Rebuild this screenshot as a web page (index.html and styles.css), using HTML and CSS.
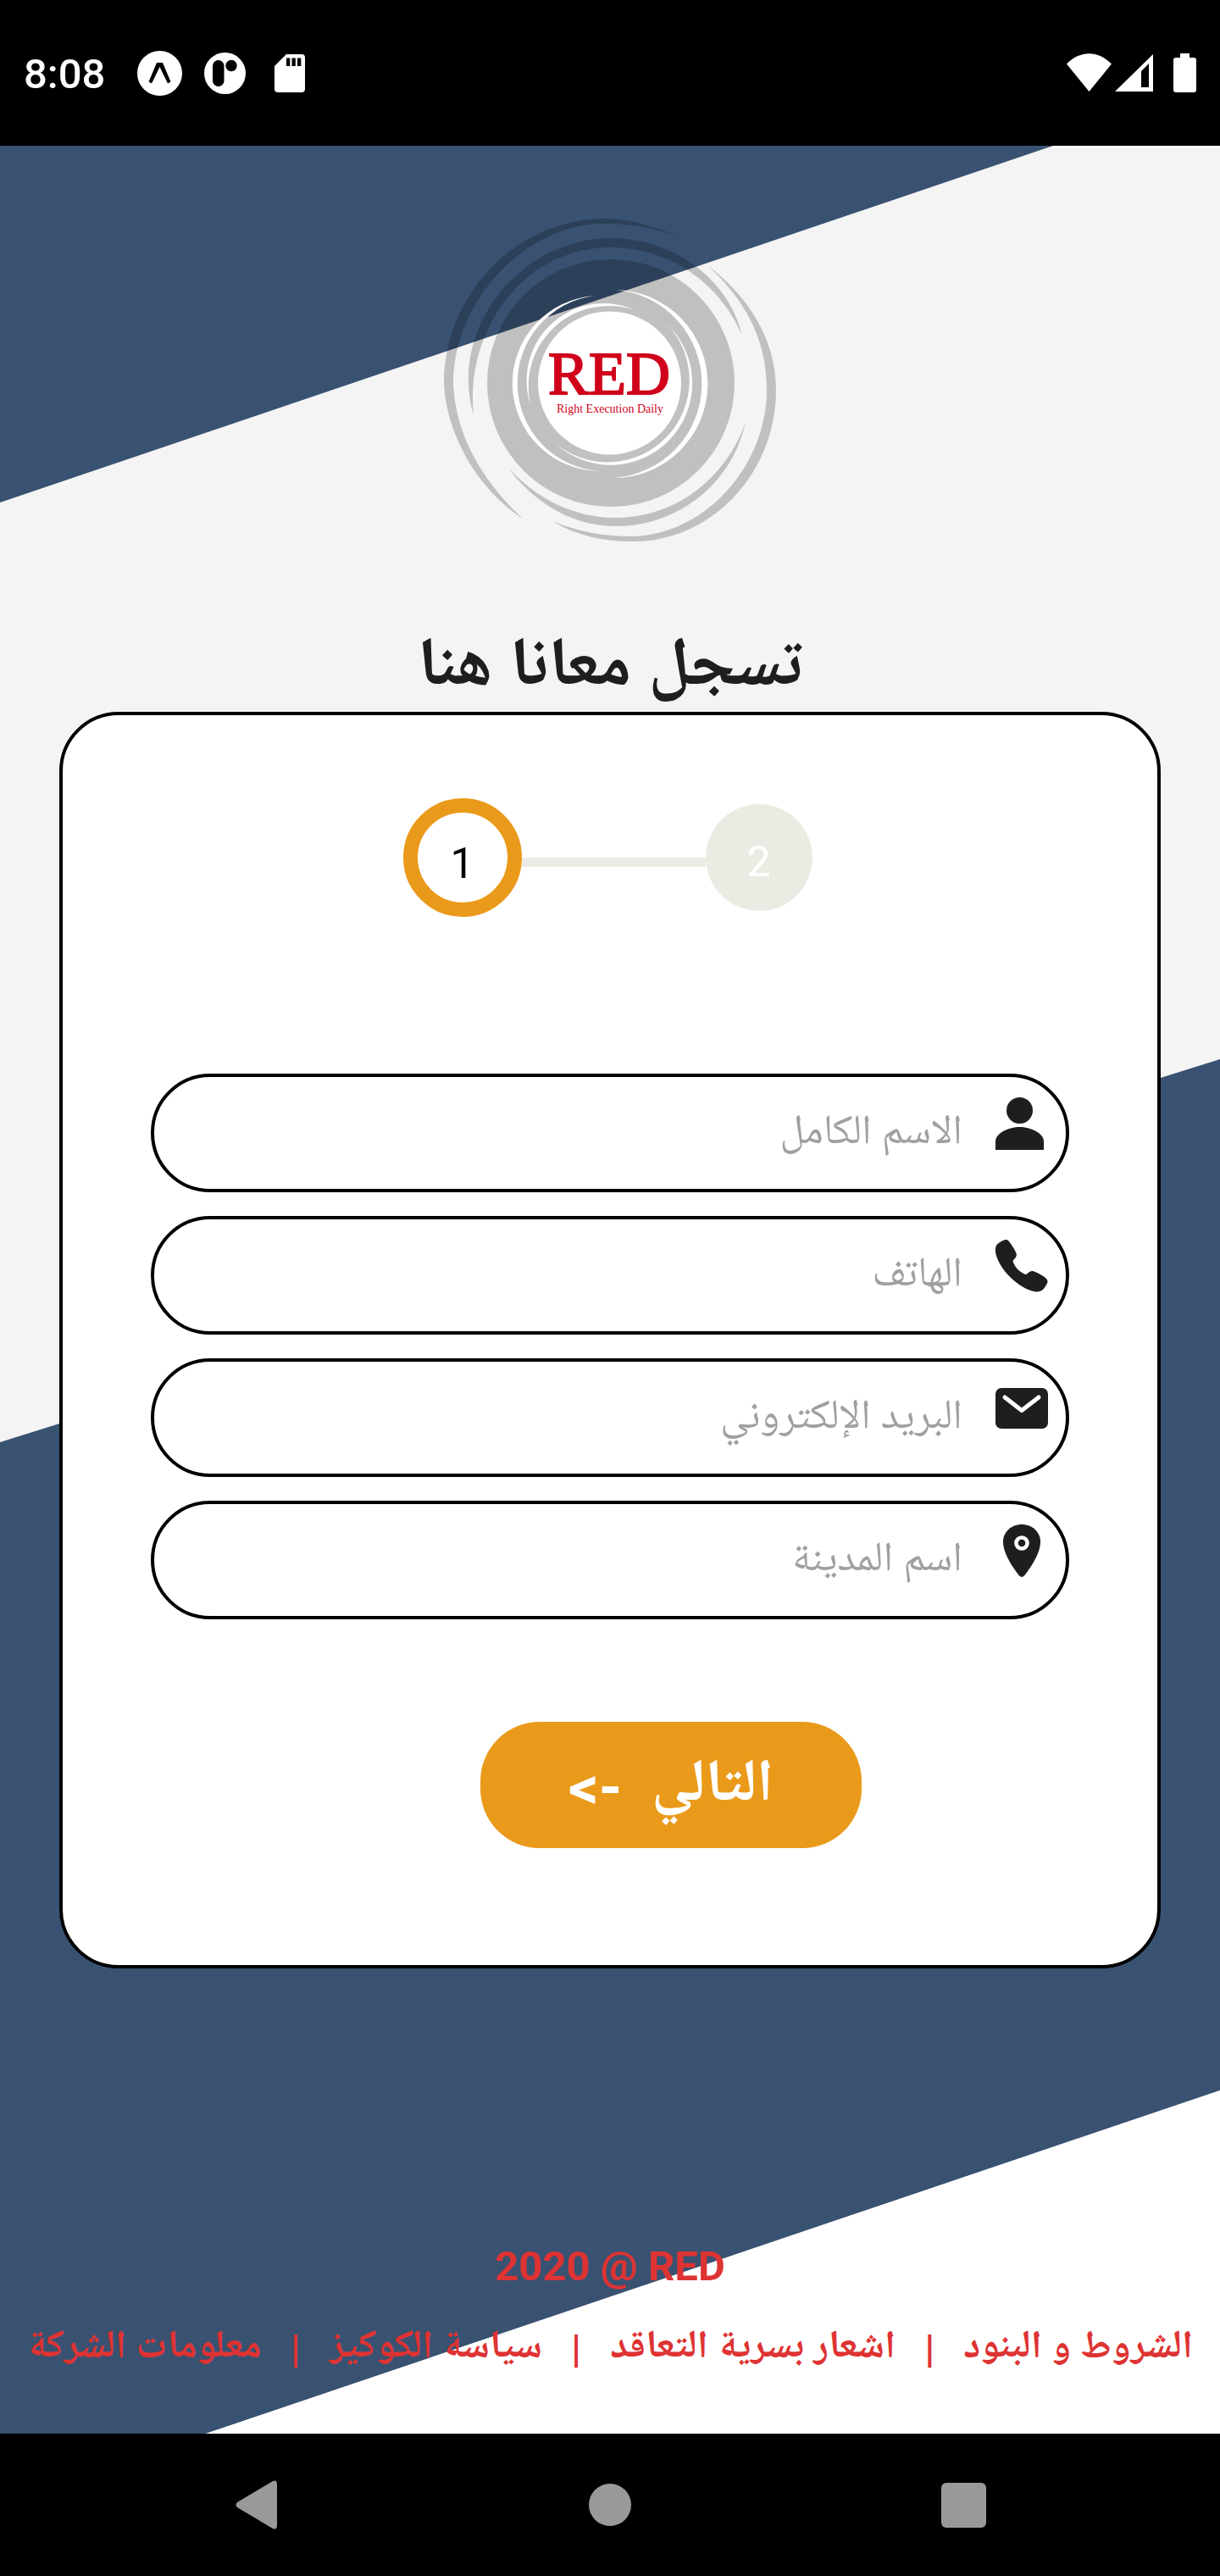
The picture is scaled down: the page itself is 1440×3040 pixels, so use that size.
FILE: index.html
```
<!DOCTYPE html>
<html lang="ar" dir="rtl">
<head>
<meta charset="utf-8">
<title>RED</title>
<link rel="stylesheet" href="styles.css">
</head>
<body>
<header class="status" dir="ltr">
  <div class="status-group status-left">
    <span class="clock">8:08</span>
    <svg width="53" height="53" viewBox="0 0 53 53"><circle cx="26.500" cy="26.500" r="26.500" fill="#fff"/><path d="M23 14h7l9.500 22.500-3.500 2L26.500 19 17 38.500l-3.500-2z" fill="#000"/></svg>
    <svg width="49" height="49" viewBox="0 0 49 49"><circle cx="24.500" cy="24.500" r="24.500" fill="#fff"/><rect x="10" y="9" width="13.500" height="31" rx="6.700" fill="#000"/><circle cx="32" cy="15.500" r="6.700" fill="#000"/></svg>
    <svg class="sd" width="36" height="45" viewBox="0 0 36 45"><path d="M14 0h18q4 0 4 4v37q0 4-4 4H4q-4 0-4-4V14z" fill="#fff"/><path d="M14 4.500h4.300v9.500h-4.300zM20.500 4.500h4.300v9.500h-4.300zM27 4.500h4.300v9.500H27z" fill="#000"/></svg>
  </div>
  <div class="status-group status-right">
    <svg width="53" height="46" viewBox="0 0 53 46" fill="#fff"><path d="M26.500 45 0 12.500C16-4 37-4 53 12.500z"/></svg>
    <svg width="45" height="46" viewBox="0 0 45 46" fill="#fff" fill-rule="evenodd"><path d="M45 1v44H0zM40 12l-9 9v19h9z"/></svg>
    <svg class="battery" width="27" height="46" viewBox="0 0 27 46" fill="#fff"><path d="M8 0h11v5h5q3 0 3 3v35q0 3-3 3H3q-3 0-3-3V8q0-3 3-3h5z"/></svg>
  </div>
</header>
<main class="screen">
  <svg class="backdrop" viewBox="0 0 1440 2700" preserveAspectRatio="none" aria-hidden="true">
    <path d="M0 0H1243L0 421z" fill="#395272"/>
    <path d="M0 1530 1440 1078V2295L243 2700H0z" fill="#395272"/>
    <path d="M1440 2295V2700H243z" fill="#fff"/>
  </svg>
  <svg class="logo" width="392" height="384" viewBox="0 0 392 384" role="img" aria-label="RED Right Execution Daily">
    <g fill="#000" fill-opacity=".21">
      <circle cx="197" cy="194" r="146"/>
      <path d="M286 25C248 8 216 0 190 0 85 0 0 90 0 195 4 262 45 323 93 354 52 316 14 262 11 195 11 98 95 6 190 6c35 0 68 7 96 19z"/>
      <path d="M35 232C5 130 90 23 197 23c75 0 140 50 155 115C325 75 265 34 197 34 95 34 25 130 35 232z"/>
      <path d="M311 55c46 35 81 85 81 147 0 98-76 179-168 179-36 0-68-7-96-24 32 13 62 18 94 18 88-2 159-85 159-173 0-65-30-110-70-147z"/>
      <path d="M76 294c25 35 70 69 127 69 75 0 138-52 153-123-22 65-82 113-153 113-52 0-95-24-127-59z"/>
    </g>
    <circle cx="195.500" cy="195" r="91" fill="none" stroke="#c1c1c1" stroke-width="13"/>
    <circle cx="195.500" cy="194" r="84.500" fill="#fff"/>
    <g fill="#fff">
      <path d="M178 91A103.600 103.600 0 0 0 184 298 104 104 0 0 1 178 91z"/>
      <path d="M102 219A91 91 0 0 1 228 109 95 95 0 0 0 102 219z"/>
      <path d="M203 84A111.020 111.020 0 0 1 199 306 111.300 111.300 0 0 0 203 84z"/>
      <path d="M264 125A96.560 96.560 0 0 1 131 265 96.750 96.750 0 0 0 264 125z"/>
    </g>
    <g fill="#d0021b" text-anchor="middle" font-family="Liberation Serif, serif">
      <text x="195" y="207" font-size="72" stroke="#d0021b" stroke-width="2">RED</text>
      <text x="196" y="229" font-size="14">Right Execution Daily</text>
    </g>
  </svg>
  <h1 class="title">تسجل معانا هنا</h1>
  <form class="card">
    <ol class="steps" dir="ltr">
      <li class="step step-current">1</li>
      <li class="step-line" aria-hidden="true"></li>
      <li class="step step-next">2</li>
    </ol>
    <div class="fields">
      <label class="field">
        <svg class="field-icon" viewBox="0 0 62 62" aria-label="الاسم الكامل"><circle cx="28.500" cy="15.500" r="15.500"/><path d="M0 62V52C0 42 16 35 28.500 35S57 42 57 52v10z"/></svg>
        <input type="text" placeholder="الاسم الكامل">
      </label>
      <label class="field">
        <svg class="field-icon" viewBox="0 0 62 62" aria-label="الهاتف"><path d="M10.500.500c2-.8 4-.5 5.500 1.500 3 4 6.500 9 8.500 14 .7 2 0 4-1 5.500L21 24c-.6 1-.5 2 0 3 2.500 6 7 10.500 13 13.500 1 .5 2 .6 3 0l3-2.500c1.500-1 3.500-1.300 5.500-.6 5 1.800 10 4.600 14 8 2 1.700 2.500 4 1.500 6-2 4-5 8.500-9 9.700-3 .8-8 .3-13-2C20 50.500 6 34 1 19-.8 13-.3 8 2 5.500 4.500 3 7.500 1.500 10.500.500z"/></svg>
        <input type="tel" placeholder="الهاتف" dir="rtl">
      </label>
      <label class="field">
        <svg class="field-icon" viewBox="0 0 62 62" aria-label="البريد الإلكتروني"><rect y="7" width="62" height="48" rx="7"/><path d="M11 18l20 15.500L51 18" fill="none" stroke="#fff" stroke-width="5" stroke-linecap="round" stroke-linejoin="round"/></svg>
        <input type="email" placeholder="البريد الإلكتروني" dir="rtl">
      </label>
      <label class="field">
        <svg class="field-icon" viewBox="0 0 62 62" aria-label="اسم المدينة"><path d="M31 0c12.500 0 22 9 22 20.500C53 34 42 50 34.500 60q-3.500 4-7 0C20 50 9 34 9 20.500 9 9 18.500 0 31 0z"/><circle cx="31" cy="22" r="6.600" stroke="#fff" stroke-width="4.500"/></svg>
        <input type="text" placeholder="اسم المدينة">
      </label>
    </div>
    <button class="next" type="button">التالي  -&gt;</button>
  </form>
  <footer class="footer">
    <p class="copyright" dir="ltr">2020 @ RED</p>
    <nav class="links">
      <a href="#terms">الشروط و البنود</a><span>|</span>
      <a href="#nda">اشعار بسرية التعاقد</a><span>|</span>
      <a href="#cookies">سياسة الكوكيز</a><span>|</span>
      <a href="#company">معلومات الشركة</a>
    </nav>
  </footer>
</main>
<nav class="system-nav" dir="ltr">
  <button type="button" aria-label="Back"><svg width="50" height="58" viewBox="0 0 50 58"><path d="M44 1q5-2 5 4v48q0 6-5 4L2 32q-3-3 0-6z" fill="#999"/></svg></button>
  <button type="button" aria-label="Home"><svg width="50" height="50" viewBox="0 0 50 50"><circle cx="25" cy="25" r="25" fill="#999"/></svg></button>
  <button type="button" aria-label="Recents"><svg width="53" height="53" viewBox="0 0 53 53"><rect width="53" height="53" rx="6" fill="#999"/></svg></button>
</nav>
</body>
</html>
```
FILE: styles.css
```
* { box-sizing: border-box; }

body {
  margin: 0;
  min-height: 100vh;
  display: flex;
  flex-direction: column;
  background: #000;
  font-family: Roboto, "Noto Naskh Arabic UI", "Noto Naskh Arabic", "DejaVu Sans", sans-serif;
}

svg { display: block; flex: none; }

.status {
  height: 172px;
  padding: 0 28px;
  display: flex;
  justify-content: space-between;
  align-items: center;
  color: #fff;
}
.status-group { display: flex; align-items: center; }
.status-left { gap: 26px; }
.status-right { gap: 4px; }
.clock { padding-top: 4px; font-size: 49px; line-height: 60px; font-weight: 500; margin-right: 12px; }
.sd { margin-left: 8px; }
.battery { margin-left: 20px; }

.screen {
  position: relative;
  isolation: isolate;
  flex: 1;
  display: flex;
  flex-direction: column;
  align-items: center;
  padding: 86px 0 64px;
  background: #f4f4f4;
}
.backdrop {
  position: absolute;
  inset: 0;
  width: 100%;
  height: 100%;
  z-index: -1;
}

.title {
  margin: 93px 0 0;
  height: 105px;
  font-size: 81px;
  line-height: 114px;
  font-weight: 700;
  color: #1e1e1e;
}

.card {
  align-self: stretch;
  margin: 0 70px;
  padding: 98px 104px 138px;
  border: 4px solid #000;
  border-radius: 70px;
  background: #fff;
  display: flex;
  flex-direction: column;
}

.steps {
  list-style: none;
  margin: 0 auto;
  padding: 0 16px 0 10px;
  display: flex;
  align-items: center;
}
.step {
  display: grid;
  place-items: center;
  border-radius: 50%;
  font-size: 50px;
  line-height: 58px;
}
.step-current { width: 140px; height: 140px; border: 17px solid #ea9a1a; padding-top: 14px; color: #000; }
.step-next { width: 126px; height: 126px; padding-top: 10px; background: #ebebe3; color: #fff; }
.step-line { width: 217px; height: 11px; margin-top: 10px; background: #ebebe3; }

.fields { margin-top: 185px; display: flex; flex-direction: column; gap: 28px; }
.field {
  height: 140px;
  border: 4px solid #000;
  border-radius: 70px;
  padding: 0 21px 0 60px;
  display: flex;
  gap: 39px;
}
.field-icon { width: 62px; height: 62px; margin-top: 24px; fill: #1e1e1e; }
.field input {
  flex: 1;
  min-width: 0;
  padding: 6px 0 0;
  border: 0;
  outline: 0;
  background: none;
  font: 49px/72px Roboto, "Noto Naskh Arabic UI", "Noto Naskh Arabic", "DejaVu Sans", sans-serif;
  color: #1e1e1e;
}
.field input::placeholder { color: #a0a0a0; opacity: 1; }

.next {
  width: 450px;
  height: 149px;
  margin: 121px 245px 0 0;
  border: 0;
  border-radius: 70px;
  background: #ea9a1a;
  color: #fff;
  font: inherit;
  font-size: 70px;
  font-weight: 700;
  white-space: pre;
}

.footer {
  margin-top: auto;
  align-self: stretch;
  color: #de3333;
  font-weight: 700;
}
.copyright { margin: 0; text-align: center; font-size: 49px; line-height: 58px; }
.links {
  margin-top: 32px;
  padding: 0 32px;
  display: flex;
  justify-content: space-between;
  align-items: center;
  font-size: 46px;
  line-height: 72px;
  white-space: nowrap;
}
.links a { color: inherit; text-decoration: none; }

.system-nav {
  height: 168px;
  padding: 0 94px;
  display: flex;
  align-items: center;
}
.system-nav button {
  flex: 1;
  display: grid;
  place-items: center;
  padding: 0;
  border: 0;
  background: none;
}
```
